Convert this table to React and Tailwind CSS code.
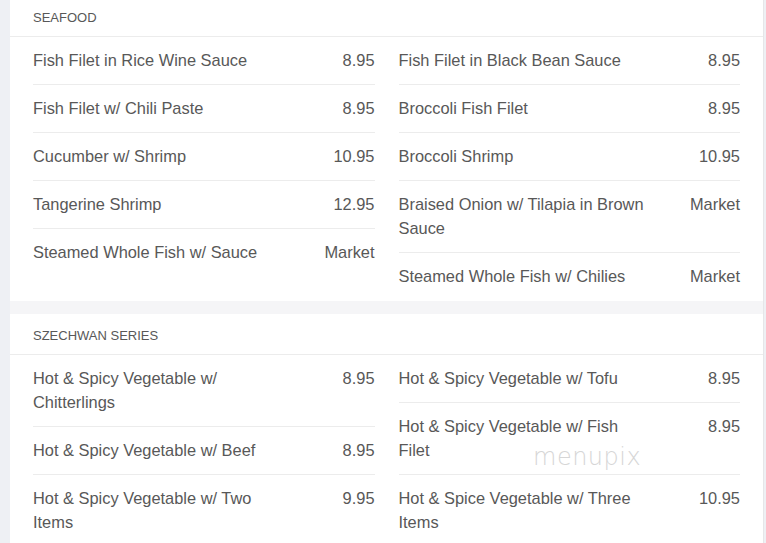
import React from "react";

const sections = [
  {
    title: "SEAFOOD",
    left: [
      ["Fish Filet in Rice Wine Sauce", "8.95"],
      ["Fish Filet w/ Chili Paste", "8.95"],
      ["Cucumber w/ Shrimp", "10.95"],
      ["Tangerine Shrimp", "12.95"],
      ["Steamed Whole Fish w/ Sauce", "Market"],
    ],
    right: [
      ["Fish Filet in Black Bean Sauce", "8.95"],
      ["Broccoli Fish Filet", "8.95"],
      ["Broccoli Shrimp", "10.95"],
      ["Braised Onion w/ Tilapia in Brown Sauce", "Market"],
      ["Steamed Whole Fish w/ Chilies", "Market"],
    ],
  },
  {
    title: "SZECHWAN SERIES",
    left: [
      ["Hot & Spicy Vegetable w/ Chitterlings", "8.95"],
      ["Hot & Spicy Vegetable w/ Beef", "8.95"],
      ["Hot & Spicy Vegetable w/ Two Items", "9.95"],
    ],
    right: [
      ["Hot & Spicy Vegetable w/ Tofu", "8.95"],
      ["Hot & Spicy Vegetable w/ Fish Filet", "8.95"],
      ["Hot & Spice Vegetable w/ Three Items", "10.95"],
    ],
  },
];

const Column = ({ items }) => (
  <div className="flex flex-col">
    {items.map(([name, price], i) => (
      <div
        key={name}
        className={`flex justify-between pt-[11px] leading-[24px] ${
          i < items.length - 1 ? "pb-[12px] border-b border-[#ececec]" : "pb-[13px]"
        }`}
      >
        <span className="w-[252px]">{name}</span>
        <span className="text-right">{price}</span>
      </div>
    ))}
  </div>
);

const App = () => {
  return (
    <div
      className="h-screen overflow-hidden bg-[#eef0f4] pl-[10px] text-[#585858]"
      style={{ fontFamily: '"Liberation Sans", Arial, sans-serif' }}
    >
      <div className="relative -mt-[4px] w-[754px] flex flex-col gap-[13px] bg-[#f5f5f7] border-r border-[#e6e6e8]">
        {sections.map((s) => (
          <div key={s.title} className="bg-white">
            <div className="border-b border-[#ececec] px-[23px] pt-[12px] pb-[8px] text-[13px] leading-[20px]">
              {s.title}
            </div>
            <div className="grid grid-cols-2 gap-x-[24px] px-[23px] text-[16.4px]">
              <Column items={s.left} />
              <Column items={s.right} />
            </div>
          </div>
        ))}
      </div>
      <div
        aria-hidden="true"
        className="absolute left-[533px] top-[445px] select-none text-[24px] leading-none tracking-[0.5px] text-[#d6d6d6]"
        style={{ fontFamily: '"DejaVu Sans", sans-serif', fontWeight: 200 }}
      >
        menupix
      </div>
    </div>
  );
};

export default App;
